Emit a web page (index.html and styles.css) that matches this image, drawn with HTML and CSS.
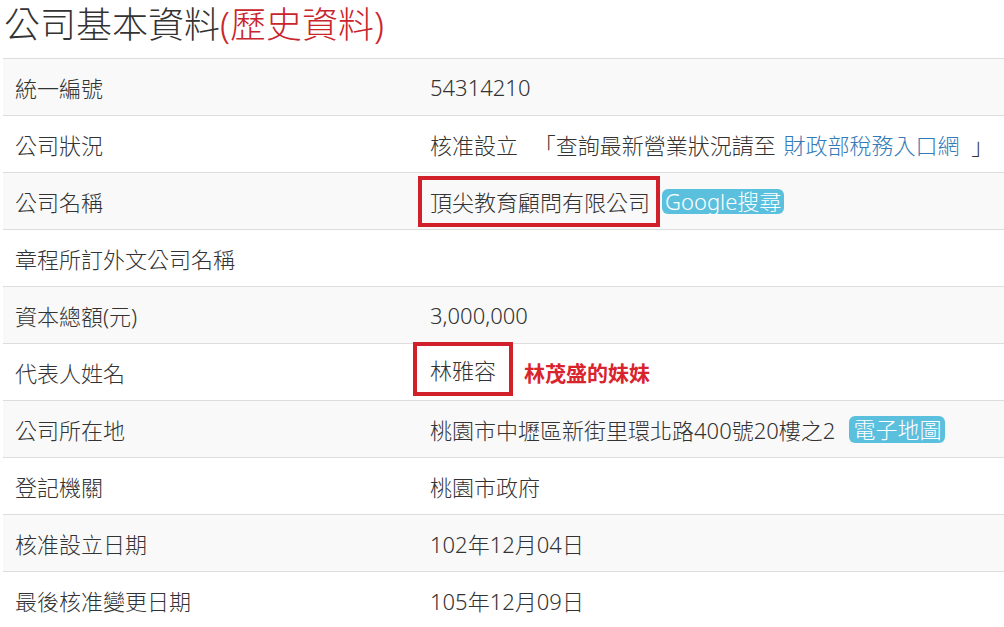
FILE: index.html
```html
<!DOCTYPE html>
<html lang="zh-Hant">
<head>
    <meta charset="UTF-8">
    <meta name="viewport" content="width=device-width, initial-scale=1.0">
    <title>公司基本資料</title>
    <link rel="stylesheet" href="styles.css">
</head>
<body>
    <div class="page">
        <h1 class="title">公司基本資料<span class="history">(歷史資料)</span></h1>
        <table class="info-table">
            <colgroup>
                <col class="col-label">
                <col>
            </colgroup>
            <tr>
                <td>統一編號</td>
                <td>54314210</td>
            </tr>
            <tr>
                <td>公司狀況</td>
                <td>核准設立 <span class="quote">「查詢最新營業狀況請至</span> <a href="#">財政部稅務入口網</a> <span class="quote-end">」</span></td>
            </tr>
            <tr>
                <td>公司名稱</td>
                <td>
                    <div class="cell-row">
                        <span class="mark mark-name">頂尖教育顧問有限公司</span><span class="badge badge-google">Google搜尋</span>
                    </div>
                </td>
            </tr>
            <tr>
                <td>章程所訂外文公司名稱</td>
                <td></td>
            </tr>
            <tr>
                <td>資本總額(元)</td>
                <td>3,000,000</td>
            </tr>
            <tr>
                <td>代表人姓名</td>
                <td>
                    <div class="cell-row">
                        <span class="mark mark-person">林雅容</span><span class="note">林茂盛的妹妹</span>
                    </div>
                </td>
            </tr>
            <tr>
                <td>公司所在地</td>
                <td>
                    <div class="cell-row">
                        <span>桃園市中壢區新街里環北路400號20樓之2</span><span class="badge badge-map">電子地圖</span>
                    </div>
                </td>
            </tr>
            <tr>
                <td>登記機關</td>
                <td>桃園市政府</td>
            </tr>
            <tr>
                <td>核准設立日期</td>
                <td>102年12月04日</td>
            </tr>
            <tr>
                <td>最後核准變更日期</td>
                <td>105年12月09日</td>
            </tr>
        </table>
    </div>
</body>
</html>
```

FILE: styles.css
```css
html, body {
    margin: 0;
    padding: 0;
    background: #fff;
    overflow: hidden;
}
body {
    font-family: "Noto Sans", "Noto Sans CJK TC", sans-serif;
    font-weight: 300;
    color: #333;
}
.page {
    padding-left: 3px;
}
.title {
    margin: 0 0 8px 1px;
    font-size: 36px;
    font-weight: 300;
    line-height: 50px;
    color: #333;
}
.history {
    color: #c9252c;
}
.info-table {
    width: 1001px;
    border-collapse: collapse;
    table-layout: fixed;
    font-size: 22px;
}
.col-label {
    width: 415px;
}
.info-table td {
    height: 57px;
    padding: 0 12px;
    border-top: 1px solid #ddd;
    vertical-align: middle;
    white-space: nowrap;
    box-sizing: border-box;
}
.info-table tr:nth-child(odd) td {
    background: #f9f9f9;
}
.info-table a {
    color: #337ab7;
    text-decoration: none;
    margin-left: 2px;
}
.quote {
    margin-left: 10px;
}
.quote-end {
    margin-left: 6px;
}
.cell-row {
    display: flex;
    align-items: center;
}
.mark {
    display: inline-flex;
    align-items: center;
    border: 4px solid #d0202a;
    box-sizing: border-box;
}
.mark-name {
    height: 51px;
    margin-left: -12px;
    padding: 0 6px 0 8px;
}
.mark-person {
    height: 54px;
    margin-left: -17px;
    padding: 0 13px;
    position: relative;
    top: -3px;
}
.note {
    margin-left: 11px;
    color: #d9232d;
    font-weight: bold;
    font-size: 21px;
}
.badge {
    display: inline-block;
    background: #5bc0de;
    color: #fff;
    border-radius: 6px;
    padding: 0 3px;
    line-height: 25px;
}
.badge-google {
    margin-left: 2px;
}
.badge-map {
    margin-left: 14px;
    padding: 0 4px;
    line-height: 27px;
}
```
